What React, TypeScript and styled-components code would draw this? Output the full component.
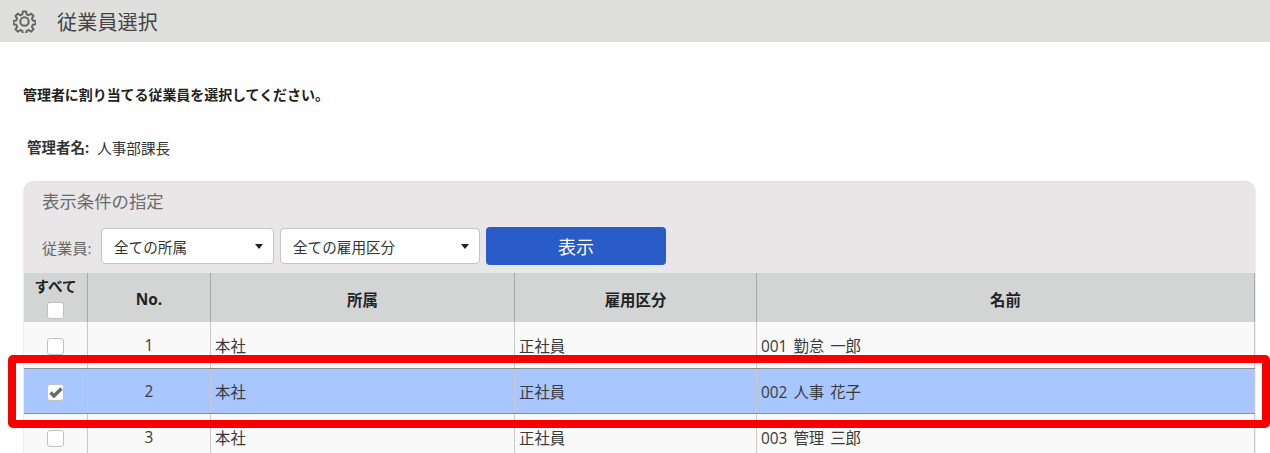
import React from 'react';
import styled, { createGlobalStyle } from 'styled-components';

const GlobalStyle = createGlobalStyle`
  html, body {
    margin: 0;
    padding: 0;
    height: 453px;
    overflow: hidden;
    background: #fff;
  }
  body {
    font-family: "Open Sans", "Noto Sans CJK JP", sans-serif;
    color: #333;
  }
`;

const Page = styled.div`
  position: relative;
  height: 453px;
  overflow: hidden;
`;

const TitleBar = styled.header`
  height: 42px;
  background: #dfdfdd;
  display: flex;
  align-items: center;
  padding-left: 13px;
  gap: 21px;
  color: #444;
`;

const Title = styled.h1`
  margin: 0;
  padding-top: 3px;
  font-size: 20px;
  font-weight: 400;
  line-height: 39px;
  letter-spacing: 0.2px;
`;

const Content = styled.main`
  padding: 43px 15px 0 23px;
`;

const Lead = styled.p`
  margin: 0;
  font-size: 14px;
  line-height: 20px;
  font-weight: 700;
  color: #222;
  letter-spacing: -0.06px;
`;

const ManagerRow = styled.div`
  margin-top: 33px;
  padding-left: 4px;
  display: flex;
  gap: 8px;
  line-height: 20px;
`;

const ManagerLabel = styled.span`
  font-size: 14.5px;
  font-weight: 700;
  color: #333;
`;

const ManagerName = styled.span`
  font-size: 14.6px;
  color: #333;
`;

const Panel = styled.section`
  margin: 24px 0 0 1px;
  background: #e8e6e7;
  border-radius: 10px 10px 0 0;
  box-shadow: 0 -1px 0 #dedede, 0 0 0 1px #eeeeee;
`;

const PanelTitle = styled.div`
  height: 45px;
  padding: 7px 0 0 18px;
  box-sizing: border-box;
  font-size: 17.4px;
  line-height: 24px;
  color: #6b6b6b;
`;

const FilterRow = styled.div`
  height: 46px;
  display: flex;
  align-items: flex-start;
  padding-left: 18px;
`;

const FilterLabel = styled.span`
  font-size: 15px;
  line-height: 20px;
  margin-top: 11px;
  width: 59px;
  color: #666;
  letter-spacing: 0.2px;
`;

const SelectBox = styled.div<{ $width: number }>`
  width: ${(p) => p.$width}px;
  height: 36px;
  margin-top: 1px;
  margin-right: 6px;
  box-sizing: border-box;
  background: #fff;
  border: 1px solid #c4c4c4;
  border-radius: 4px;
  display: flex;
  align-items: center;
  justify-content: space-between;
  padding: 0 10px 0 12px;
  font-size: 14.6px;
  color: #333;
`;

const Caret = styled.span`
  width: 0;
  height: 0;
  border-left: 4px solid transparent;
  border-right: 4px solid transparent;
  border-top: 5px solid #222;
`;

const ShowButton = styled.button`
  width: 180px;
  height: 38px;
  border: 0;
  border-radius: 4px;
  background: #295cc8;
  color: #fff;
  font: inherit;
  font-size: 18px;
`;

const Row = styled.div<{ $head?: boolean; $selected?: boolean }>`
  display: grid;
  grid-template-columns: 64px 123px 304px 242px 1fr;
  height: ${(p) => (p.$head ? 49 : 46)}px;
  box-sizing: border-box;
  background: ${(p) => (p.$head ? '#d3d5d4' : p.$selected ? '#a8c6ff' : '#f9f9f9')};
  ${(p) => p.$selected && 'border-top: 1px solid #8a8f9c; border-bottom: 1px solid #8a8f9c;'}
`;

const Cell = styled.div<{ $head?: boolean; $align?: string }>`
  border-right: 1px solid ${(p) => (p.$head ? '#a9a9a9' : '#c8c8c8')};
  display: flex;
  align-items: center;
  justify-content: ${(p) => p.$align || 'flex-start'};
  padding: ${(p) => (p.$head ? '3px 0 0' : p.$align ? '0' : '0 4px')};
  font-size: 15.4px;
  font-weight: ${(p) => (p.$head ? 700 : 400)};
  color: ${(p) => (p.$head ? '#222' : '#3a3a3a')};
  word-spacing: 2px;
  min-width: 0;
`;

const CheckCell = styled(Cell)`
  flex-direction: column;
  gap: 4px;
  padding: 0;
`;

const AllLabel = styled.span`
  font-size: 14.6px;
  line-height: 20px;
  margin-top: 3px;
`;

const CheckBox = styled.span`
  width: 17px;
  height: 17px;
  margin-top: 2px;
  box-sizing: border-box;
  background: #fff;
  border: 1px solid #c2c2c2;
  border-radius: 3px;
  display: flex;
  align-items: center;
  justify-content: center;
`;

const Highlight = styled.div`
  position: absolute;
  left: 8px;
  top: 355px;
  width: 1262px;
  height: 73px;
  box-sizing: border-box;
  border: 8px solid #f70000;
  border-radius: 5px;
  pointer-events: none;
`;

const GearIcon = () => (
  <svg width="23" height="23" viewBox="0 0 24 24" fill="none" stroke="#666" strokeWidth="2.1" strokeLinejoin="round">
    <path d="M10.3 1.6h3.4l.6 3 2.1.9 2.6-1.7 2.4 2.4-1.7 2.6.9 2.1 3 .6v3.4l-3 .6-.9 2.1 1.7 2.6-2.4 2.4-2.6-1.7-2.1.9-.6 3h-3.4l-.6-3-2.1-.9-2.6 1.7-2.4-2.4 1.7-2.6-.9-2.1-3-.6v-3.4l3-.6.9-2.1-1.7-2.6 2.4-2.4 2.6 1.7 2.1-.9z" />
    <circle cx="12" cy="12" r="4.4" />
  </svg>
);

const CheckMark = () => (
  <svg width="14" height="12" viewBox="0 0 14 12" fill="none" stroke="#6a6a6a" strokeWidth="3.4">
    <path d="M1.5 6.5 5 10 12.5 2.5" />
  </svg>
);

const employees = [
  { no: 1, dept: '本社', type: '正社員', name: '001 勤怠 一郎' },
  { no: 2, dept: '本社', type: '正社員', name: '002 人事 花子', selected: true },
  { no: 3, dept: '本社', type: '正社員', name: '003 管理 三郎' },
];

const App = () => (
  <Page>
    <GlobalStyle />
    <TitleBar>
      <GearIcon />
      <Title>従業員選択</Title>
    </TitleBar>
    <Content>
      <Lead>管理者に割り当てる従業員を選択してください。</Lead>
      <ManagerRow>
        <ManagerLabel>管理者名:</ManagerLabel>
        <ManagerName>人事部課長</ManagerName>
      </ManagerRow>
      <Panel>
        <PanelTitle>表示条件の指定</PanelTitle>
        <FilterRow>
          <FilterLabel>従業員:</FilterLabel>
          <SelectBox $width={173}>
            全ての所属
            <Caret />
          </SelectBox>
          <SelectBox $width={200}>
            全ての雇用区分
            <Caret />
          </SelectBox>
          <ShowButton>表示</ShowButton>
        </FilterRow>
        <Row $head>
          <CheckCell $head $align="flex-start">
            <AllLabel>すべて</AllLabel>
            <CheckBox />
          </CheckCell>
          <Cell $head $align="center">No.</Cell>
          <Cell $head $align="center">所属</Cell>
          <Cell $head $align="center">雇用区分</Cell>
          <Cell $head $align="center">名前</Cell>
        </Row>
        {employees.map((emp) => (
          <Row key={emp.no} $selected={emp.selected}>
            <Cell $align="center">
              <CheckBox>{emp.selected && <CheckMark />}</CheckBox>
            </Cell>
            <Cell $align="center">{emp.no}</Cell>
            <Cell>{emp.dept}</Cell>
            <Cell>{emp.type}</Cell>
            <Cell>{emp.name}</Cell>
          </Row>
        ))}
      </Panel>
    </Content>
    <Highlight />
  </Page>
);

export default App;
